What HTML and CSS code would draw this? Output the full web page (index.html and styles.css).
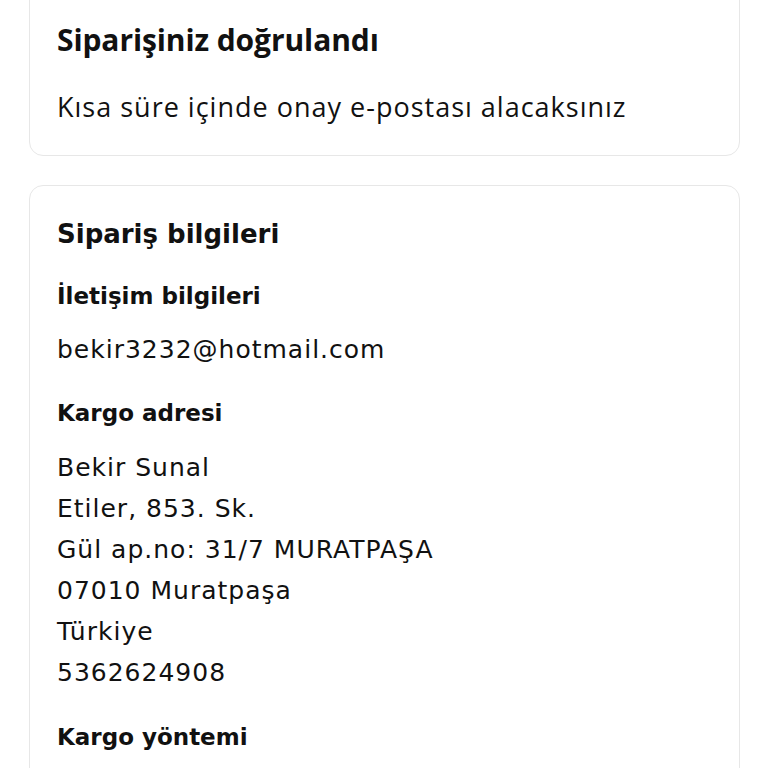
FILE: index.html
```html
<!DOCTYPE html>
<html lang="tr">
<head>
<meta charset="utf-8">
<link rel="stylesheet" href="styles.css">
</head>
<body>
<div class="page">
  <section class="card card-confirm">
    <h2 class="confirm-title">Siparişiniz doğrulandı</h2>
    <p class="confirm-text">Kısa süre içinde onay e-postası alacaksınız</p>
  </section>
  <section class="card card-info">
    <h2 class="info-title">Sipariş bilgileri</h2>
    <h3 class="sub sub-contact">İletişim bilgileri</h3>
    <p class="val">bekir3232@hotmail.com</p>
    <h3 class="sub sub-address">Kargo adresi</h3>
    <div class="address">
      <div>Bekir Sunal</div>
      <div>Etiler, 853. Sk.</div>
      <div>Gül ap.no: 31/7 MURATPAŞA</div>
      <div>07010 Muratpaşa</div>
      <div>Türkiye</div>
      <div>5362624908</div>
    </div>
    <h3 class="sub sub-method">Kargo yöntemi</h3>
  </section>
</div>
</body>
</html>
```
FILE: styles.css
```css
html, body { margin: 0; padding: 0; background: #fff; }
body { color: #111; overflow: hidden; height: 768px; }
.page {
  display: flex;
  flex-direction: column;
  gap: 29px;
  padding: 0 28px 0 29px;
  margin-top: -20px;
}
.card {
  border: 1.5px solid #e7e7e7;
  border-radius: 14px;
  padding: 0 27px;
  background: #fff;
}
.card-confirm { padding-top: 41px; padding-bottom: 31px; }
.confirm-title {
  margin: 0;
  font-family: "Open Sans", sans-serif;
  font-weight: 700;
  font-size: 30px;
  line-height: 36px;
  letter-spacing: -0.1px;
}
.confirm-text {
  margin: 32px 0 0;
  font-family: "Open Sans", sans-serif;
  font-weight: 400;
  font-size: 27px;
  line-height: 34px;
  letter-spacing: 1px;
}
.card-info { padding-top: 29.5px; height: 700px; }
.info-title {
  margin: 0;
  font-family: "DejaVu Sans", sans-serif;
  font-weight: 700;
  font-size: 26px;
  line-height: 36px;
}
.sub {
  font-family: "DejaVu Sans", sans-serif;
  font-weight: 700;
  font-size: 23px;
  line-height: 32px;
  margin-bottom: 0;
}
.sub-contact { margin-top: 28px; }
.sub-address { margin-top: 30.5px; }
.sub-method { margin-top: 28px; }
.val {
  margin: 21px 0 0;
  font-family: "DejaVu Sans", sans-serif;
  font-size: 25px;
  line-height: 34px;
  letter-spacing: 1px;
}
.address {
  margin-top: 18px;
  font-family: "DejaVu Sans", sans-serif;
  font-size: 25px;
  line-height: 41px;
  letter-spacing: 1px;
}
```
